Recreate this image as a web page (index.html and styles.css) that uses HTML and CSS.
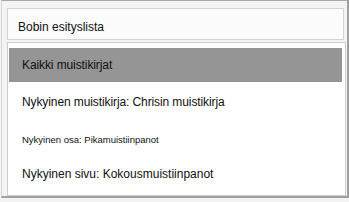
FILE: index.html
```html
<!DOCTYPE html>
<html lang="fi">
<head>
    <meta charset="UTF-8">
    <title>Bobin esityslista</title>
    <link rel="stylesheet" href="styles.css">
</head>
<body>
    <div class="frame">
        <div class="field">Bobin esityslista</div>
        <ul class="list">
            <li class="item active">Kaikki muistikirjat</li>
            <li class="item tall">Nykyinen muistikirja: Chrisin muistikirja</li>
            <li class="item small">Nykyinen osa: Pikamuistiinpanot</li>
            <li class="item">Nykyinen sivu: Kokousmuistiinpanot</li>
        </ul>
    </div>
</body>
</html>
```

FILE: styles.css
```css
* {
    margin: 0;
    padding: 0;
    list-style: none;
    box-sizing: border-box;
}

body {
    background-color: #f3f3f3;
    font-family: "Liberation Sans", Arial, sans-serif;
    color: #111;
}

.frame {
    width: 348px;
    height: 198px;
    margin-left: 1px;
    padding: 7px 2px 0 5px;
    border-top: 1px solid #a8a8a8;
    border-right: 2px solid #a0a0a0;
    border-bottom: 2px solid #a0a0a0;
    border-left: 1px solid #d6d6d6;
    background-color: #f3f3f3;
}

.field {
    display: flex;
    align-items: center;
    width: 337px;
    height: 32px;
    padding: 5px 0 0 10px;
    border: 1px solid #d4d4d4;
    background-color: #fbfbfb;
    font-size: 12px;
}

.list {
    width: 339px;
    height: 154px;
    margin-top: 2px;
    padding: 5px 3px 0 1px;
    border: 1px solid #cdcdcd;
    background-color: #fff;
}

.item {
    display: flex;
    align-items: center;
    height: 36px;
    padding-left: 13px;
    font-size: 12px;
}

.item.active {
    height: 34px;
    background-color: #959595;
    letter-spacing: -0.1px;
}

.item.tall {
    height: 40px;
    letter-spacing: -0.1px;
}

.item.small {
    height: 34px;
    font-size: 9.5px;
}
```
